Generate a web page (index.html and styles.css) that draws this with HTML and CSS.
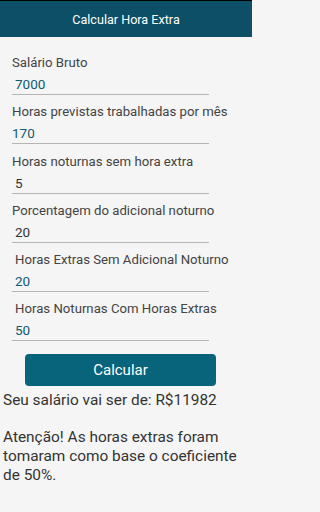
FILE: index.html
```html
<!DOCTYPE html>
<html lang="pt-BR">
<head>
<meta charset="utf-8">
<link rel="stylesheet" href="styles.css">
</head>
<body>
<div class="status"></div>
<header class="appbar">Calcular Hora Extra</header>
<main class="content">
  <div class="field">
    <div class="label">Salário Bruto</div>
    <div class="value teal indent">7000</div>
  </div>
  <div class="field">
    <div class="label">Horas previstas trabalhadas por mês</div>
    <div class="value teal">170</div>
  </div>
  <div class="field">
    <div class="label">Horas noturnas sem hora extra</div>
    <div class="value indent">5</div>
  </div>
  <div class="field">
    <div class="label">Porcentagem do adicional noturno</div>
    <div class="value indent">20</div>
  </div>
  <div class="field">
    <div class="label indent">Horas Extras Sem Adicional Noturno</div>
    <div class="value teal indent">20</div>
  </div>
  <div class="field">
    <div class="label indent">Horas Noturnas Com Horas Extras</div>
    <div class="value teal indent">50</div>
  </div>
  <div class="btnrow"><button class="btn">Calcular</button></div>
  <p class="result">Seu salário vai ser de: R$11982</p>
  <p class="note">Atenção! As horas extras foram tomaram como base o coeficiente de 50%.</p>
</main>
</body>
</html>
```
FILE: styles.css
```css
html, body {
  margin: 0;
  padding: 0;
  background: #f5f5f5;
  font-family: Roboto, "Noto Sans", sans-serif;
}
body {
  width: 252px;
  height: 512px;
  overflow: hidden;
}
.status {
  height: 1px;
  background: #000;
}
.appbar {
  height: 36px;
  background: #0d4f66;
  color: #fff;
  font-size: 12.6px;
  display: flex;
  align-items: center;
  justify-content: center;
}
.content {
  padding-top: 18px;
}
.field {
  margin: 0 0 9.3px 12px;
}
.label {
  font-size: 13.2px;
  line-height: 16px;
  color: #444;
  white-space: nowrap;
}
.value {
  width: 197px;
  box-sizing: border-box;
  margin-top: 5px;
  padding-bottom: 2px;
  border-bottom: 1px solid #b5b5b5;
  font-size: 13.5px;
  line-height: 16px;
  color: #333;
}
.teal { color: #0e5a74; }
.indent { padding-left: 3px; }
.btnrow {
  display: flex;
  padding: 3.5px 0 0 25px;
}
.btn {
  width: 191px;
  height: 32px;
  border: none;
  border-radius: 4px;
  background: #07647a;
  color: #fff;
  font-family: Roboto, sans-serif;
  font-size: 15px;
  padding: 0;
}
.result, .note {
  margin: 0;
  padding-left: 3px;
  font-size: 15.4px;
  line-height: 19px;
  color: #333;
}
.result { margin-top: 4.5px; }
.note { margin-top: 18px; padding-right: 4px; }
```
